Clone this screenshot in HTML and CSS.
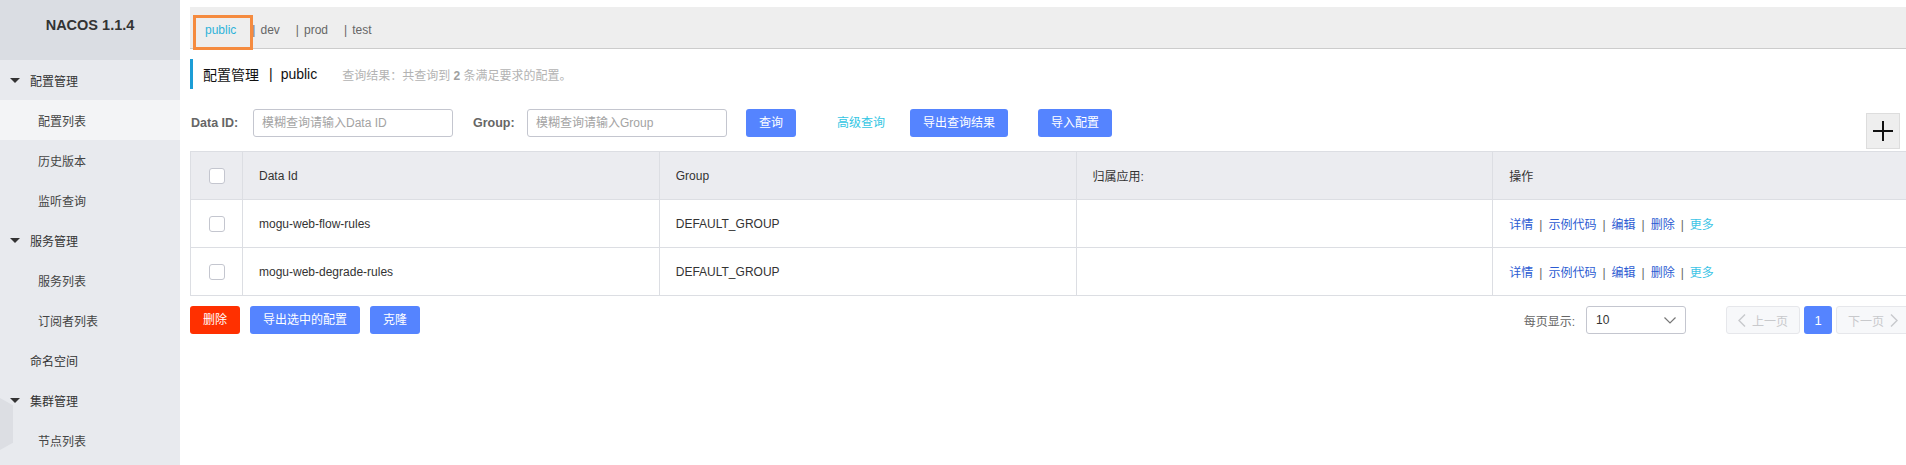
FILE: index.html
```html
<!DOCTYPE html>
<html lang="zh-CN">
<head>
<meta charset="utf-8">
<title>Nacos</title>
<link rel="stylesheet" href="styles.css">
</head>
<body>
<div class="layout">
  <aside class="sidebar">
    <div class="brand">NACOS 1.1.4</div>
    <ul class="menu">
      <li class="menu-group"><span class="caret"></span>配置管理</li>
      <li class="menu-sub is-active">配置列表</li>
      <li class="menu-sub">历史版本</li>
      <li class="menu-sub">监听查询</li>
      <li class="menu-group"><span class="caret"></span>服务管理</li>
      <li class="menu-sub">服务列表</li>
      <li class="menu-sub">订阅者列表</li>
      <li class="menu-top">命名空间</li>
      <li class="menu-group"><span class="caret"></span>集群管理</li>
      <li class="menu-sub">节点列表</li>
    </ul>
    <div class="collapse-handle"></div>
  </aside>

  <main class="main">
    <div class="ns-bar">
      <span class="ns-item ns-current">public</span>
      <span class="ns-item"><span class="ns-sep">|</span>dev</span>
      <span class="ns-item"><span class="ns-sep">|</span>prod</span>
      <span class="ns-item"><span class="ns-sep">|</span>test</span>
      <span class="highlight-box"></span>
    </div>

    <div class="page-title">
      <span class="title-main">配置管理</span>
      <span class="title-sep">|</span>
      <span class="title-ns">public</span>
      <span class="title-hint">查询结果：共查询到 <b>2</b> 条满足要求的配置。</span>
    </div>

    <div class="search-row">
      <label class="form-label label-dataid">Data ID:</label>
      <input class="text-input" type="text" placeholder="模糊查询请输入Data ID">
      <label class="form-label label-group">Group:</label>
      <input class="text-input" type="text" placeholder="模糊查询请输入Group">
      <button class="btn btn-primary btn-query">查询</button>
      <a class="link-advanced">高级查询</a>
      <button class="btn btn-primary btn-export">导出查询结果</button>
      <button class="btn btn-primary btn-import">导入配置</button>
      <button class="btn-add" aria-label="add">
        <svg width="20" height="20" viewBox="0 0 20 20"><path d="M0 10H20M10 0V20" stroke="#111" stroke-width="2"/></svg>
      </button>
    </div>

    <table class="data-table">
      <colgroup>
        <col class="col-check">
        <col class="col-data">
        <col class="col-data">
        <col class="col-data">
        <col class="col-data">
      </colgroup>
      <thead>
        <tr>
          <th class="cell-check"><span class="checkbox"></span></th>
          <th>Data Id</th>
          <th>Group</th>
          <th>归属应用:</th>
          <th>操作</th>
        </tr>
      </thead>
      <tbody>
        <tr>
          <td class="cell-check"><span class="checkbox"></span></td>
          <td>mogu-web-flow-rules</td>
          <td>DEFAULT_GROUP</td>
          <td></td>
          <td class="ops"><a>详情</a><span class="op-sep">|</span><a>示例代码</a><span class="op-sep">|</span><a>编辑</a><span class="op-sep">|</span><a>删除</a><span class="op-sep">|</span><a class="op-more">更多</a></td>
        </tr>
        <tr>
          <td class="cell-check"><span class="checkbox"></span></td>
          <td>mogu-web-degrade-rules</td>
          <td>DEFAULT_GROUP</td>
          <td></td>
          <td class="ops"><a>详情</a><span class="op-sep">|</span><a>示例代码</a><span class="op-sep">|</span><a>编辑</a><span class="op-sep">|</span><a>删除</a><span class="op-sep">|</span><a class="op-more">更多</a></td>
        </tr>
      </tbody>
    </table>

    <div class="footer-row">
      <button class="btn btn-danger">删除</button>
      <button class="btn btn-primary btn-gap">导出选中的配置</button>
      <button class="btn btn-primary btn-gap">克隆</button>
      <div class="pager">
        <span class="pager-label">每页显示:</span>
        <div class="select">
          <span>10</span>
          <svg width="12" height="7" viewBox="0 0 12 7"><path d="M0.5 0.5L6 6L11.5 0.5" fill="none" stroke="#777" stroke-width="1.2"/></svg>
        </div>
        <button class="page-btn page-prev" disabled>
          <svg width="8" height="13" viewBox="0 0 8 13"><path d="M7 0.5L1 6.5L7 12.5" fill="none" stroke="#c8c9cc" stroke-width="1.4"/></svg>
          <span>上一页</span>
        </button>
        <button class="page-num">1</button>
        <button class="page-btn page-next" disabled>
          <span>下一页</span>
          <svg width="8" height="13" viewBox="0 0 8 13"><path d="M1 0.5L7 6.5L1 12.5" fill="none" stroke="#c8c9cc" stroke-width="1.4"/></svg>
        </button>
      </div>
    </div>
  </main>
</div>
</body>
</html>
```

FILE: styles.css
```css
* { box-sizing: border-box; }

html, body {
  margin: 0;
  padding: 0;
  height: 465px;
  overflow: hidden;
  background: #fff;
}

body {
  font-family: "Liberation Sans", "Noto Sans CJK SC", sans-serif;
  font-size: 12px;
  color: #333;
}

.layout {
  display: flex;
  height: 465px;
}

/* ---------- sidebar ---------- */
.sidebar {
  position: relative;
  flex: 0 0 180px;
  width: 180px;
  height: 465px;
  background: #e8eaee;
}

.brand {
  height: 60px;
  line-height: 50px;
  text-align: center;
  font-size: 14.5px;
  font-weight: bold;
  color: #333;
  background: #dadde3;
}

.menu {
  list-style: none;
  margin: 0;
  padding: 0;
}

.menu li {
  height: 40px;
  display: flex;
  align-items: center;
  font-size: 12px;
}

.menu-group {
  padding-left: 10px;
  color: #333;
}

.caret {
  width: 0;
  height: 0;
  border-left: 5px solid transparent;
  border-right: 5px solid transparent;
  border-top: 5px solid #333;
  margin-right: 10px;
}

.menu-sub {
  padding-left: 38px;
  color: #444;
}

.menu-sub.is-active {
  background: #f3f4f6;
}

.menu-top {
  padding-left: 30px;
  color: #333;
}

.collapse-handle {
  position: absolute;
  left: 0;
  top: 398px;
  width: 13px;
  height: 52px;
  background: #dcdee3;
  clip-path: polygon(0 0, 100% 14%, 100% 86%, 0 100%);
}

/* ---------- main ---------- */
.main {
  flex: 0 0 1730px;
  width: 1730px;
  padding-left: 10px;
}

.ns-bar {
  position: relative;
  margin-top: 7px;
  height: 42px;
  background: #eeeeee;
  border-bottom: 1px solid #cccccc;
  display: flex;
  align-items: center;
  padding-left: 15px;
  padding-top: 5px;
  color: #666;
}

.ns-item {
  margin-right: 16px;
}

.ns-current {
  color: #2eb3d9;
}

.ns-sep {
  margin-right: 5px;
}

.highlight-box {
  position: absolute;
  left: 3px;
  top: 8px;
  width: 60px;
  height: 35px;
  border: 3px solid #f58b3f;
}

.page-title {
  margin-top: 10px;
  height: 30px;
  border-left: 3px solid #1c9dd6;
  padding-left: 10px;
  display: flex;
  align-items: center;
  color: #111;
}

.title-main,
.title-ns {
  font-size: 14px;
}

.title-sep {
  font-size: 14px;
  margin: 0 8px 0 10px;
}

.title-hint {
  margin-left: 25px;
  color: #b3b3b3;
  font-size: 12px;
}

.title-hint b {
  color: #a0a0a0;
}

/* ---------- search row ---------- */
.search-row {
  margin-top: 20px;
  display: flex;
  align-items: flex-start;
}

.form-label {
  height: 28px;
  line-height: 28px;
  font-weight: bold;
  color: #666;
  font-size: 12.5px;
}

.label-dataid {
  width: 63px;
  padding-left: 1px;
}

.label-group {
  width: 54px;
  margin-left: 20px;
}

.text-input {
  width: 200px;
  height: 28px;
  border: 1px solid #c4c6cf;
  border-radius: 3px;
  padding: 0 8px;
  font-family: inherit;
  font-size: 12px;
  color: #333;
  outline: none;
  background: #fff;
}

.text-input::placeholder {
  color: #a3a3a3;
}

.btn {
  height: 28px;
  padding: 0 13px;
  border: none;
  border-radius: 3px;
  font-family: inherit;
  font-size: 12px;
  color: #fff;
  cursor: pointer;
  line-height: 28px;
}

.btn-primary { background: #5584ff; }
.btn-danger { background: #ff3000; }

.btn-query { margin-left: 19px; }

.link-advanced {
  margin-left: 41px;
  line-height: 28px;
  color: #33c6e3;
}

.btn-export { margin-left: 25px; }
.btn-import { margin-left: 30px; }

.btn-add {
  margin-left: auto;
  margin-right: 10px;
  margin-top: 4px;
  width: 34px;
  height: 36px;
  border: 1px solid #dddddd;
  background: #eeeeee;
  padding: 0;
  display: flex;
  align-items: center;
  justify-content: center;
}

/* ---------- table ---------- */
.data-table {
  margin-top: 2px;
  width: 1720px;
  border-collapse: collapse;
  table-layout: fixed;
  border: 1px solid #dcdee3;
}

.col-check { width: 52px; }

.data-table th,
.data-table td {
  height: 48px;
  padding: 0 16px;
  text-align: left;
  font-weight: normal;
  font-size: 12px;
  color: #333;
  border: 1px solid #dcdee3;
  white-space: nowrap;
}

.data-table th {
  background: #ebecf0;
}

.data-table .cell-check {
  padding: 0;
  text-align: center;
}

.checkbox {
  display: inline-block;
  width: 16px;
  height: 16px;
  border: 1px solid #c4c6cf;
  border-radius: 3px;
  background: #fff;
  vertical-align: middle;
}

.ops a {
  color: #2c5cd2;
}

.ops .op-more {
  color: #3cc4e6;
}

.op-sep {
  margin: 0 6px;
  color: #666;
}

/* ---------- footer ---------- */
.footer-row {
  margin-top: 10px;
  display: flex;
  align-items: center;
}

.btn-gap { margin-left: 10px; }

.pager {
  margin-left: auto;
  display: flex;
  align-items: center;
}

.pager-label {
  color: #666;
  margin-right: 11px;
}

.select {
  width: 100px;
  height: 28px;
  border: 1px solid #c4c6cf;
  border-radius: 3px;
  display: flex;
  align-items: center;
  justify-content: space-between;
  padding: 0 9px 0 9px;
  color: #333;
  background: #fff;
}

.page-btn {
  width: 74px;
  height: 28px;
  border: 1px solid #e6e7eb;
  border-radius: 3px;
  background: #f7f8fa;
  color: #c8c9cc;
  font-family: inherit;
  font-size: 12px;
  display: flex;
  align-items: center;
  justify-content: center;
  gap: 6px;
  padding: 0;
}

.page-prev { margin-left: 40px; }

.page-num {
  width: 28px;
  height: 28px;
  margin: 0 4px;
  border: none;
  border-radius: 3px;
  background: #5584ff;
  color: #fff;
  font-family: inherit;
  font-size: 13px;
  padding: 0;
}
```
